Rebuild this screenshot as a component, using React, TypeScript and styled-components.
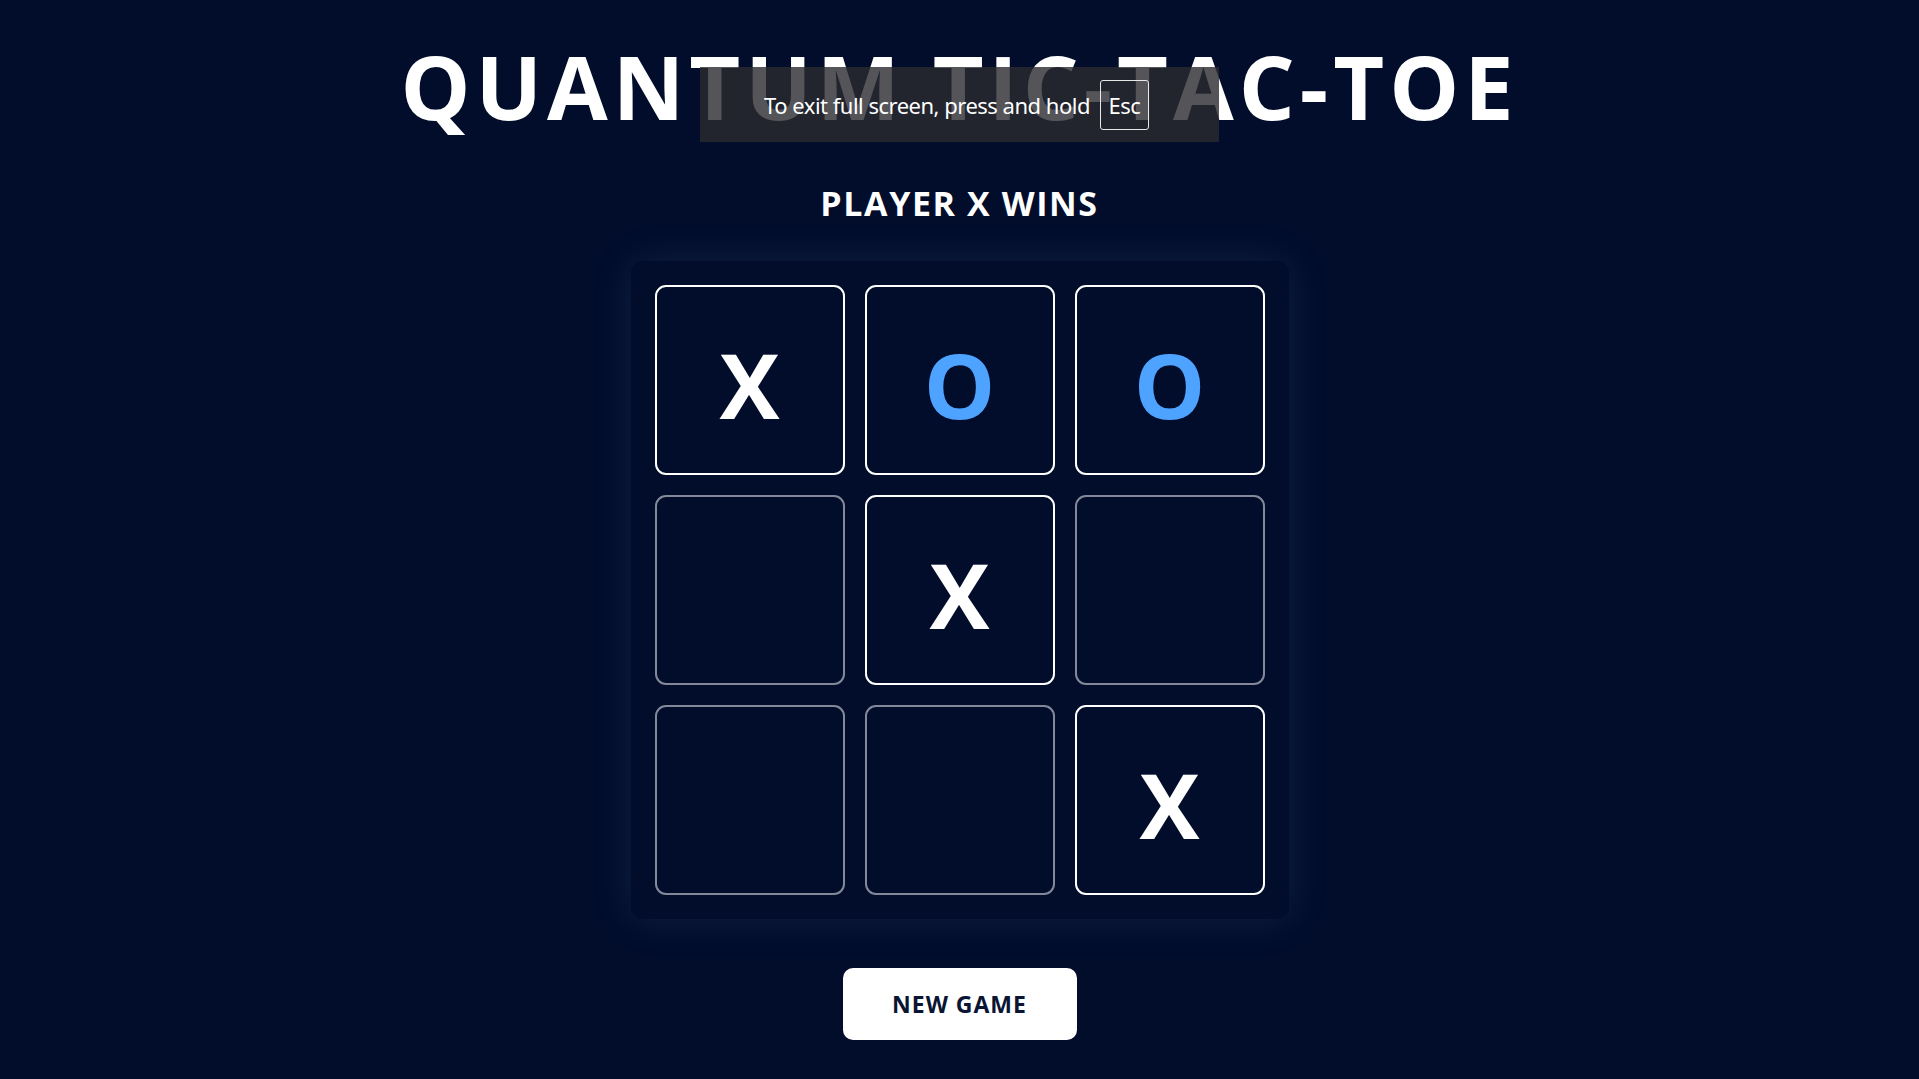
import React from "react";
import styled, { createGlobalStyle } from "styled-components";

const Global = createGlobalStyle`
  html, body { margin: 0; padding: 0; background: #010d2b; }
  body { font-family: "Open Sans", "Noto Sans", sans-serif; color: #fff; overflow: hidden; }
`;

const Page = styled.div`
  position: relative;
  width: 1919px;
  height: 1079px;
  background: #010d2b;
  display: flex;
  flex-direction: column;
  align-items: center;
`;

const Title = styled.h1`
  margin: 26px 0 0 0;
  font-size: 88px;
  line-height: 120px;
  font-weight: 700;
  letter-spacing: 5px;
  color: #ffffff;
`;

const Status = styled.h2`
  margin: 35px 0 0 0;
  font-size: 34px;
  line-height: 44px;
  font-weight: 700;
  letter-spacing: 1.6px;
  color: #ffffff;
`;

const Board = styled.div`
  margin-top: 36px;
  display: grid;
  grid-template-columns: repeat(3, 190px);
  grid-template-rows: repeat(3, 190px);
  gap: 20px;
  padding: 24px;
  background: #010d2b;
  border-radius: 12px;
  box-shadow: 0 0 40px rgba(110, 130, 190, 0.16);
`;

const Cell = styled.div<{ $filled: boolean }>`
  box-sizing: border-box;
  border: 2.5px solid ${(p) => (p.$filled ? "#ffffff" : "#848999")};
  border-radius: 11px;
  background: #010d2b;
  display: flex;
  align-items: center;
  justify-content: center;
`;

const Mark = styled.span<{ $o: boolean }>`
  font-size: 90px;
  font-weight: 700;
  line-height: 1;
  color: ${(p) => (p.$o ? "#4da3ff" : "#ffffff")};
  transform: translateY(4px);
`;

const NewGame = styled.button`
  margin-top: 49px;
  width: 234px;
  height: 72px;
  border: none;
  border-radius: 10px;
  background: #ffffff;
  color: #0a1433;
  font-family: "Open Sans", "Noto Sans", sans-serif;
  font-size: 23px;
  font-weight: 700;
  letter-spacing: 1px;
  cursor: pointer;
`;

const Notice = styled.div`
  position: absolute;
  left: 700px;
  top: 67px;
  width: 519px;
  height: 75px;
  background: rgba(42, 43, 47, 0.8);
  display: flex;
  align-items: center;
  justify-content: center;
  gap: 10px;
  padding-right: 6px;
  box-sizing: border-box;
  font-family: "Noto Sans", "Open Sans", sans-serif;
  font-size: 22px;
  color: #ffffff;
  letter-spacing: -0.5px;
`;

const Key = styled.span`
  box-sizing: border-box;
  width: 49px;
  height: 50px;
  border: 1.5px solid #e8e8ea;
  border-radius: 3px;
  display: flex;
  align-items: center;
  justify-content: center;
`;

const board = ["X", "O", "O", "", "X", "", "", "", "X"];

export default function App() {
  return (
    <>
      <Global />
      <Page>
        <Title>QUANTUM TIC-TAC-TOE</Title>
        <Status>PLAYER X WINS</Status>
        <Board>
          {board.map((v, i) => (
            <Cell key={i} $filled={v !== ""}>
              {v && <Mark $o={v === "O"}>{v}</Mark>}
            </Cell>
          ))}
        </Board>
        <NewGame>NEW GAME</NewGame>
        <Notice>
          <span>To exit full screen, press and hold</span>
          <Key>Esc</Key>
        </Notice>
      </Page>
    </>
  );
}
